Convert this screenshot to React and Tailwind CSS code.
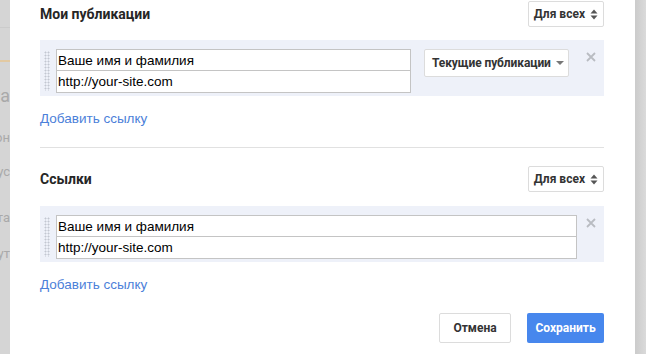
const dots = "w-[6px] self-stretch my-[2px] bg-[radial-gradient(circle,#c3c7d1_0.9px,transparent_1.1px)] bg-[length:3px_3px]";

function UpDown() {
  return (
    <svg width="8" height="11" viewBox="0 0 8 11" className="ml-[5px]">
      <path d="M4 0.5 L7.5 4.5 L0.5 4.5 Z" fill="#555" />
      <path d="M4 10.5 L7.5 6.5 L0.5 6.5 Z" fill="#555" />
    </svg>
  );
}

function Caret() {
  return (
    <svg width="8" height="4" viewBox="0 0 8 4" className="ml-[5px]">
      <path d="M0 0 L8 0 L4 4 Z" fill="#777" />
    </svg>
  );
}

function Close() {
  return (
    <svg width="10" height="10" viewBox="0 0 10 10" className="mt-[3px]">
      <path d="M1 1 L9 9 M9 1 L1 9" stroke="#b9bcc2" strokeWidth="1.8" />
    </svg>
  );
}

function Header({ title }) {
  return (
    <div className="flex items-center justify-between h-[26px]">
      <h2 className="text-[14px] font-bold text-[#262626]">{title}</h2>
      <button className="h-[26px] px-[5px] flex items-center border border-[#dcdcdc] rounded-[2px] bg-white text-[12px] font-bold text-[#333]">
        Для всех
        <UpDown />
      </button>
    </div>
  );
}

function Inputs({ width }) {
  return (
    <div className={"flex flex-col " + width}>
      <input
        className="h-[22px] border border-[#c4c4c4] bg-white px-[1px] text-[13.5px] text-black outline-none font-['Liberation_Sans',Arial,sans-serif]"
        defaultValue="Ваше имя и фамилия"
      />
      <input
        className="h-[22px] border border-t-0 border-[#c4c4c4] bg-white px-[1px] text-[13.5px] text-black outline-none font-['Liberation_Sans',Arial,sans-serif]"
        defaultValue="http://your-site.com"
      />
    </div>
  );
}

function AddLink() {
  return (
    <a className="block text-[13.5px] text-[#4b80d9] font-['Liberation_Sans',Arial,sans-serif] leading-4">
      Добавить ссылку
    </a>
  );
}

export default function App() {
  return (
    <div className="w-[646px] h-[354px] flex overflow-hidden font-['Roboto',Arial,sans-serif]">
      <div className="w-[10px] bg-[#d5d5d5] flex flex-col items-end overflow-hidden text-[#a9a9a9] whitespace-nowrap">
        <div className="mt-[27px] w-full h-px bg-[#cbcbcb]" />
        <div className="mt-[32px] w-full h-[2px] bg-[#e2c9a2]" />
        <span className="mt-[24px] text-[18px] leading-5">Ра</span>
        <span className="mt-[24px] text-[13px] leading-4">он</span>
        <span className="mt-[18px] text-[13px] leading-4">ус</span>
        <span className="mt-[30px] text-[13px] leading-4">та</span>
        <span className="mt-[20px] text-[13px] leading-4">ут</span>
      </div>

      <div className="flex-1 bg-white pl-[30px] pr-[31px] pt-px">
        <Header title="Мои публикации" />
        <div className="mt-[13px] bg-[#eef1f9] flex pl-[4px] pr-[8px] pt-[9px] pb-[3px]">
          <div className={dots} />
          <div className="ml-[6px] flex flex-1 items-start">
            <Inputs width="w-[355px]" />
            <button className="ml-[13px] h-[28px] pl-[7px] pr-[4px] flex items-center bg-white border border-[#dcdcdc] rounded-[2px] text-[12px] font-bold text-[#333] tracking-[-0.1px]">
              Текущие публикации
              <Caret />
            </button>
            <div className="flex-1" />
            <Close />
          </div>
        </div>
        <div className="mt-[15px]">
          <AddLink />
        </div>
        <div className="mt-[20px] h-px bg-[#e1e1e1]" />

        <div className="mt-[18px]">
          <Header title="Ссылки" />
        </div>
        <div className="mt-[14px] bg-[#eef1f9] flex pl-[4px] pr-[8px] pt-[9px] pb-[3px]">
          <div className={dots} />
          <div className="ml-[6px] flex flex-1 items-start">
            <Inputs width="w-[521px]" />
            <div className="flex-1" />
            <Close />
          </div>
        </div>
        <div className="mt-[15px]">
          <AddLink />
        </div>

        <div className="mt-[20px] flex justify-end gap-[16px]">
          <button className="h-[30px] w-[72px] border border-[#dcdcdc] rounded-[2px] bg-white text-[12px] font-bold text-[#333]">
            Отмена
          </button>
          <button className="h-[30px] w-[77px] rounded-[2px] bg-[#4787ed] text-[12px] font-bold text-white">
            Сохранить
          </button>
        </div>
      </div>

      <div className="w-[11px] bg-gradient-to-r from-[#cbcbcb] to-[#dadada]" />
    </div>
  );
}
